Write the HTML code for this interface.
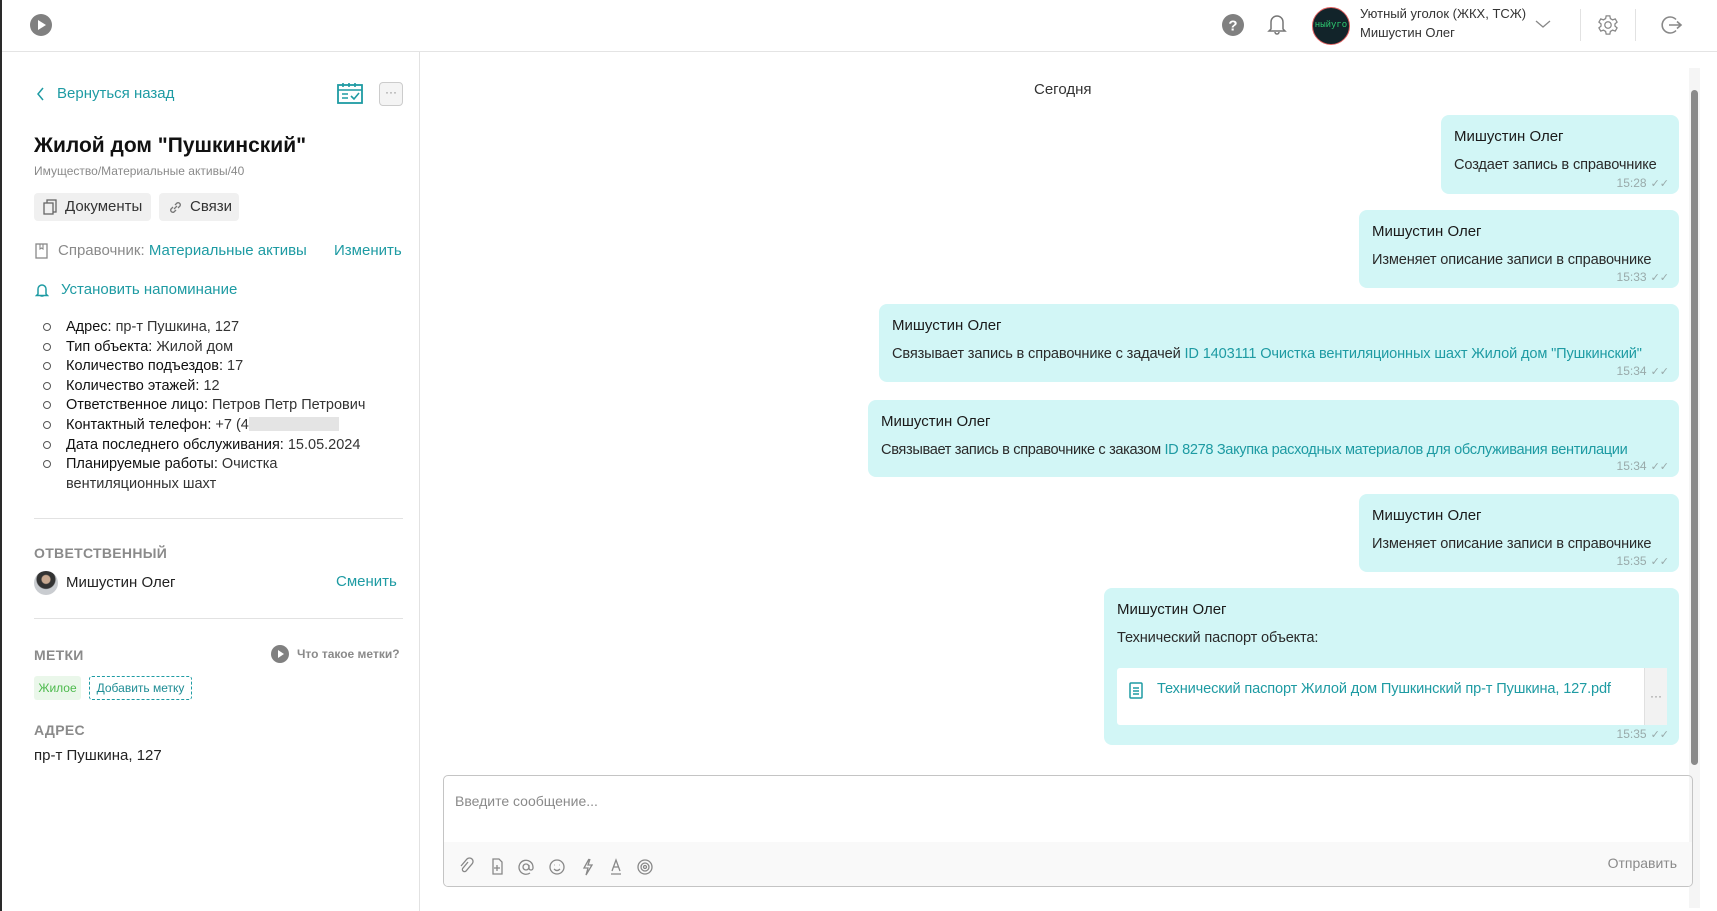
<!DOCTYPE html>
<html><head><meta charset="utf-8">
<style>
*{box-sizing:border-box;margin:0;padding:0}
body{width:1717px;height:911px;overflow:hidden;background:#fff;font-family:"Liberation Sans","DejaVu Sans",sans-serif;color:#222;position:relative}
.a{position:absolute;white-space:nowrap}
.teal{color:#1e9ba3}
.gray{color:#8a8a8a}
.b{position:absolute;background:#d2f6f6;border-radius:8px}
.b .n{position:absolute;left:13px;top:13px;font-size:15px;color:#1a1a1a}
.b .t{position:absolute;left:13px;top:42px;font-size:14.6px;letter-spacing:-0.15px;color:#2a2a2a;white-space:nowrap}
.b .tm{position:absolute;right:10px;bottom:4px;font-size:12px;color:#9aa;white-space:nowrap}
.b .tm span{font-size:11px;margin-left:4px}
li{list-style:none;position:relative;padding-left:32px;line-height:19.6px;font-size:14.5px;color:#333}
li:before{content:"";position:absolute;left:9px;top:5px;width:6px;height:6px;border:1.5px solid #555;border-radius:50%}
li b{font-weight:normal;color:#111}
.h{font-size:14px;font-weight:bold;color:#8a8a8a;letter-spacing:.3px}
</style></head><body>
<div class="a" style="left:0;top:0;width:2px;height:911px;background:#2a2a2a"></div>
<div class="a" style="left:2px;top:51px;width:1715px;height:1px;background:#e4e4e4"></div>
<svg class="a" style="left:30px;top:14px" width="22" height="22"><circle cx="11" cy="11" r="11" fill="#808080"/><path d="M8 6l8 5-8 5z" fill="#fff"/></svg>
<svg class="a" style="left:1222px;top:14px" width="22" height="22"><circle cx="11" cy="11" r="11" fill="#808080"/><text x="11" y="16.5" text-anchor="middle" font-size="15" font-weight="bold" fill="#fff" font-family="Liberation Sans">?</text></svg>
<svg class="a" style="left:1267px;top:12px" width="20" height="24"><path d="M4 17V10a6 6 0 0112 0v7l2 2H2z M8 20a2 2 0 004 0" fill="none" stroke="#777" stroke-width="1.5"/></svg>
<div class="a" style="left:1312px;top:7px;width:38px;height:38px;border-radius:50%;background:#12242a;border:1.5px solid #e06060;font-size:9px;color:#2ecc71;text-align:center;line-height:35px;font-family:'Liberation Mono',monospace">ныйуго</div>
<div class="a" style="left:1360px;top:6px;font-size:13px;color:#333">Уютный уголок (ЖКХ, ТСЖ)</div>
<div class="a" style="left:1360px;top:25px;font-size:13px;color:#333">Мишустин Олег</div>
<svg class="a" style="left:1535px;top:19px" width="16" height="10"><path d="M1 2l7 6 7-6" fill="none" stroke="#888" stroke-width="1.3"/></svg>
<div class="a" style="left:1580px;top:9px;width:1px;height:32px;background:#e2e2e2"></div>
<div class="a" style="left:1635px;top:9px;width:1px;height:32px;background:#e2e2e2"></div>
<svg class="a" style="left:1597px;top:14px" width="22" height="22" viewBox="0 0 24 24"><path d="M12 8.5a3.5 3.5 0 100 7 3.5 3.5 0 000-7zM10 2h4l.6 3 2.4 1.4 2.9-1 2 3.4-2.3 2v2.4l2.3 2-2 3.4-2.9-1L14.6 19 14 22h-4l-.6-3L7 17.6l-2.9 1-2-3.4 2.3-2v-2.4l-2.3-2 2-3.4 2.9 1L9.4 5z" fill="none" stroke="#888" stroke-width="1.4"/></svg>
<svg class="a" style="left:1659px;top:13px" width="24" height="24" viewBox="0 0 24 24"><path d="M17 6.5A8 8 0 1017 17.5" fill="none" stroke="#888" stroke-width="1.6"/><path d="M10 12h12M18 8.5l4 3.5-4 3.5" fill="none" stroke="#888" stroke-width="1.6"/></svg>

<div class="a" style="left:419px;top:52px;width:1px;height:859px;background:#e2e2e2"></div>
<svg class="a" style="left:36px;top:87px" width="9" height="14"><path d="M7 1L2 7l5 6" fill="none" stroke="#1e9ba3" stroke-width="1.5"/></svg>
<div class="a teal" style="left:57px;top:85px;font-size:15px">Вернуться назад</div>
<svg class="a" style="left:337px;top:82px" width="26" height="22"><rect x="1" y="3" width="24" height="18" fill="none" stroke="#1e9ba3" stroke-width="1.8"/><path d="M1 8h24M6 1v4M12 1v4M18 1v4M5 12h6M5 16h6M14 14l3 3 5-6" fill="none" stroke="#1e9ba3" stroke-width="1.6"/></svg>
<div class="a" style="left:379px;top:82px;width:24px;height:24px;border:1px solid #ccc;border-radius:4px;background:#f4f4f4;font-size:12px;color:#888;text-align:center;line-height:18px">···</div>
<div class="a" style="left:34px;top:134px;font-size:21px;color:#111;font-weight:600">Жилой дом "Пушкинский"</div>
<div class="a gray" style="left:34px;top:164px;font-size:12px">Имущество/Материальные активы/40</div>
<div class="a" style="left:34px;top:193px;width:117px;height:28px;background:#f0f0f0;border-radius:4px;font-size:15px;color:#333;line-height:28px;padding-left:31px">Документы</div>
<svg class="a" style="left:43px;top:199px" width="14" height="16"><rect x="4" y="1" width="9" height="12" fill="none" stroke="#666" stroke-width="1.3"/><rect x="1" y="4" width="9" height="11" fill="#f0f0f0" stroke="#666" stroke-width="1.3"/></svg>
<div class="a" style="left:159px;top:193px;width:80px;height:28px;background:#f0f0f0;border-radius:4px;font-size:15px;color:#333;line-height:28px;padding-left:31px">Связи</div>
<svg class="a" style="left:168px;top:200px" width="15" height="15"><path d="M6 9l3-3M5 7L3 9a2.2 2.2 0 003 3l2-2M10 8l2-2a2.2 2.2 0 00-3-3L7 5" fill="none" stroke="#777" stroke-width="1.3"/></svg>
<svg class="a" style="left:35px;top:243px" width="13" height="16"><rect x="1" y="1" width="11" height="14" fill="none" stroke="#888" stroke-width="1.3"/><path d="M5 1v5l1.5-1 1.5 1V1" fill="none" stroke="#888" stroke-width="1.1"/></svg>
<div class="a gray" style="left:58px;top:242px;font-size:15px">Справочник: <span class="teal">Материальные активы</span></div>
<div class="a teal" style="left:334px;top:242px;font-size:15px">Изменить</div>
<svg class="a" style="left:35px;top:282px" width="14" height="16"><path d="M3 12V7a4 4 0 018 0v5l1.5 1.5h-11zM5.5 14h3" fill="none" stroke="#1e9ba3" stroke-width="1.5"/></svg>
<div class="a teal" style="left:61px;top:281px;font-size:15px">Установить напоминание</div>
<ul class="a" style="left:34px;top:318px;white-space:normal;width:350px">
<li><b>Адрес:</b> пр-т Пушкина, 127</li>
<li><b>Тип объекта:</b> Жилой дом</li>
<li><b>Количество подъездов:</b> 17</li>
<li><b>Количество этажей:</b> 12</li>
<li><b>Ответственное лицо:</b> Петров Петр Петрович</li>
<li><b>Контактный телефон:</b> +7 (4<span style="display:inline-block;width:90px;height:14px;background:#e4e4e4;vertical-align:-2px"></span></li>
<li><b>Дата последнего обслуживания:</b> 15.05.2024</li>
<li><b>Планируемые работы:</b> Очистка<br>вентиляционных шахт</li>
</ul>
<div class="a" style="left:34px;top:518px;width:369px;height:1px;background:#e2e2e2"></div>
<div class="a h" style="left:34px;top:545px">ОТВЕТСТВЕННЫЙ</div>
<div class="a" style="left:34px;top:571px;width:24px;height:24px;border-radius:50%;background:radial-gradient(circle at 50% 35%,#c8a890 0 4px,#333 5px 9px,#c9ccd0 10px)"></div>
<div class="a" style="left:66px;top:574px;font-size:15px;color:#222">Мишустин Олег</div>
<div class="a teal" style="left:336px;top:573px;font-size:15px">Сменить</div>
<div class="a" style="left:34px;top:618px;width:369px;height:1px;background:#e2e2e2"></div>
<div class="a h" style="left:34px;top:647px">МЕТКИ</div>
<svg class="a" style="left:271px;top:645px" width="18" height="18"><circle cx="9" cy="9" r="9" fill="#808080"/><path d="M7 5l6 4-6 4z" fill="#fff"/></svg>
<div class="a gray" style="left:297px;top:647px;font-size:12px;font-weight:bold">Что такое метки?</div>
<div class="a" style="left:34px;top:676px;width:47px;height:24px;background:#eaf7ea;border-radius:3px;font-size:12px;color:#4cba4c;line-height:24px;text-align:center">Жилое</div>
<div class="a" style="left:89px;top:676px;width:103px;height:24px;border:1px dashed #1e9ba3;border-radius:3px;font-size:12px;color:#1e8c94;line-height:22px;text-align:center">Добавить метку</div>
<div class="a h" style="left:34px;top:722px">АДРЕС</div>
<div class="a" style="left:34px;top:747px;font-size:15px;color:#222">пр-т Пушкина, 127</div>

<div class="a" style="left:1034px;top:81px;font-size:15px;color:#333">Сегодня</div>
<div class="a" style="left:1689px;top:68px;width:11px;height:840px;background:#f5f5f5"></div>
<div class="a" style="left:1691px;top:90px;width:7px;height:675px;background:#8a8a8a;border-radius:4px"></div>

<div class="b" style="left:1441px;top:115px;width:238px;height:79px"><div class="n">Мишустин Олег</div><div class="t">Создает запись в справочнике</div><div class="tm">15:28<span>✓✓</span></div></div>
<div class="b" style="left:1359px;top:210px;width:320px;height:78px"><div class="n">Мишустин Олег</div><div class="t">Изменяет описание записи в справочнике</div><div class="tm">15:33<span>✓✓</span></div></div>
<div class="b" style="left:879px;top:304px;width:800px;height:78px"><div class="n">Мишустин Олег</div><div class="t">Связывает запись в справочнике с задачей <span class="teal">ID 1403111 Очистка вентиляционных шахт Жилой дом "Пушкинский"</span></div><div class="tm">15:34<span>✓✓</span></div></div>
<div class="b" style="left:868px;top:400px;width:811px;height:77px"><div class="n">Мишустин Олег</div><div class="t" style="letter-spacing:-0.35px">Связывает запись в справочнике с заказом <span class="teal">ID 8278 Закупка расходных материалов для обслуживания вентилации</span></div><div class="tm">15:34<span>✓✓</span></div></div>
<div class="b" style="left:1359px;top:494px;width:320px;height:78px"><div class="n">Мишустин Олег</div><div class="t">Изменяет описание записи в справочнике</div><div class="tm">15:35<span>✓✓</span></div></div>
<div class="b" style="left:1104px;top:588px;width:575px;height:157px"><div class="n">Мишустин Олег</div><div class="t">Технический паспорт объекта:</div>
 <div style="position:absolute;left:13px;top:80px;width:550px;height:57px;background:#fff;border-radius:3px">
  <svg style="position:absolute;left:12px;top:14px" width="14" height="17"><rect x="1" y="1" width="12" height="15" rx="1" fill="none" stroke="#1e9ba3" stroke-width="1.5"/><path d="M4 6h6M4 9h6M4 12h6" stroke="#1e9ba3" stroke-width="1.4"/></svg>
  <div class="teal" style="position:absolute;left:40px;top:13px;font-size:14.6px;letter-spacing:-0.15px;white-space:nowrap">Технический паспорт Жилой дом Пушкинский пр-т Пушкина, 127.pdf</div>
  <div style="position:absolute;right:0;top:0;width:23px;height:57px;background:#f2f2f2;border-left:1px solid #e0e0e0;color:#888;text-align:center;line-height:57px;font-size:12px">···</div>
 </div>
 <div class="tm">15:35<span>✓✓</span></div></div>

<div class="a" style="left:443px;top:775px;width:1250px;height:112px;border:1px solid #c4c4c4;border-radius:5px;overflow:hidden">
 <div style="position:absolute;left:0;top:66px;width:100%;height:46px;background:#f9f9f9"></div>
 <div class="gray" style="position:absolute;left:11px;top:17px;font-size:14px">Введите сообщение...</div>
 <div class="gray" style="position:absolute;right:15px;top:79px;font-size:14px">Отправить</div>
 <svg style="position:absolute;left:15px;top:81px" width="210" height="20" fill="none" stroke="#888" stroke-width="1.3">
  <path d="M9 5l-5 6a2 2 0 003 3l6-7a3.5 3.5 0 00-5-5L2 9"/>
  <path d="M34 2h6l3 3v12H34z M38 8v6M35 11h6"/>
  <circle cx="67" cy="10" r="3"/><path d="M70 8v3a2 2 0 004 0v-1a7 7 0 10-3 6"/>
  <circle cx="98" cy="10" r="7"/><path d="M95 12q3 3 6 0M95.5 8h.5M100 8h.5"/>
  <path d="M130 2l-5 9h4l-2 7 6-10h-4l2-6"/>
  <path d="M153 14l4-11 4 11M154.5 10h5M152 17h10"/>
  <circle cx="186" cy="10" r="7"/><circle cx="186" cy="10" r="4"/><circle cx="186" cy="10" r="1.5"/>
 </svg>
</div>
</body></html>
